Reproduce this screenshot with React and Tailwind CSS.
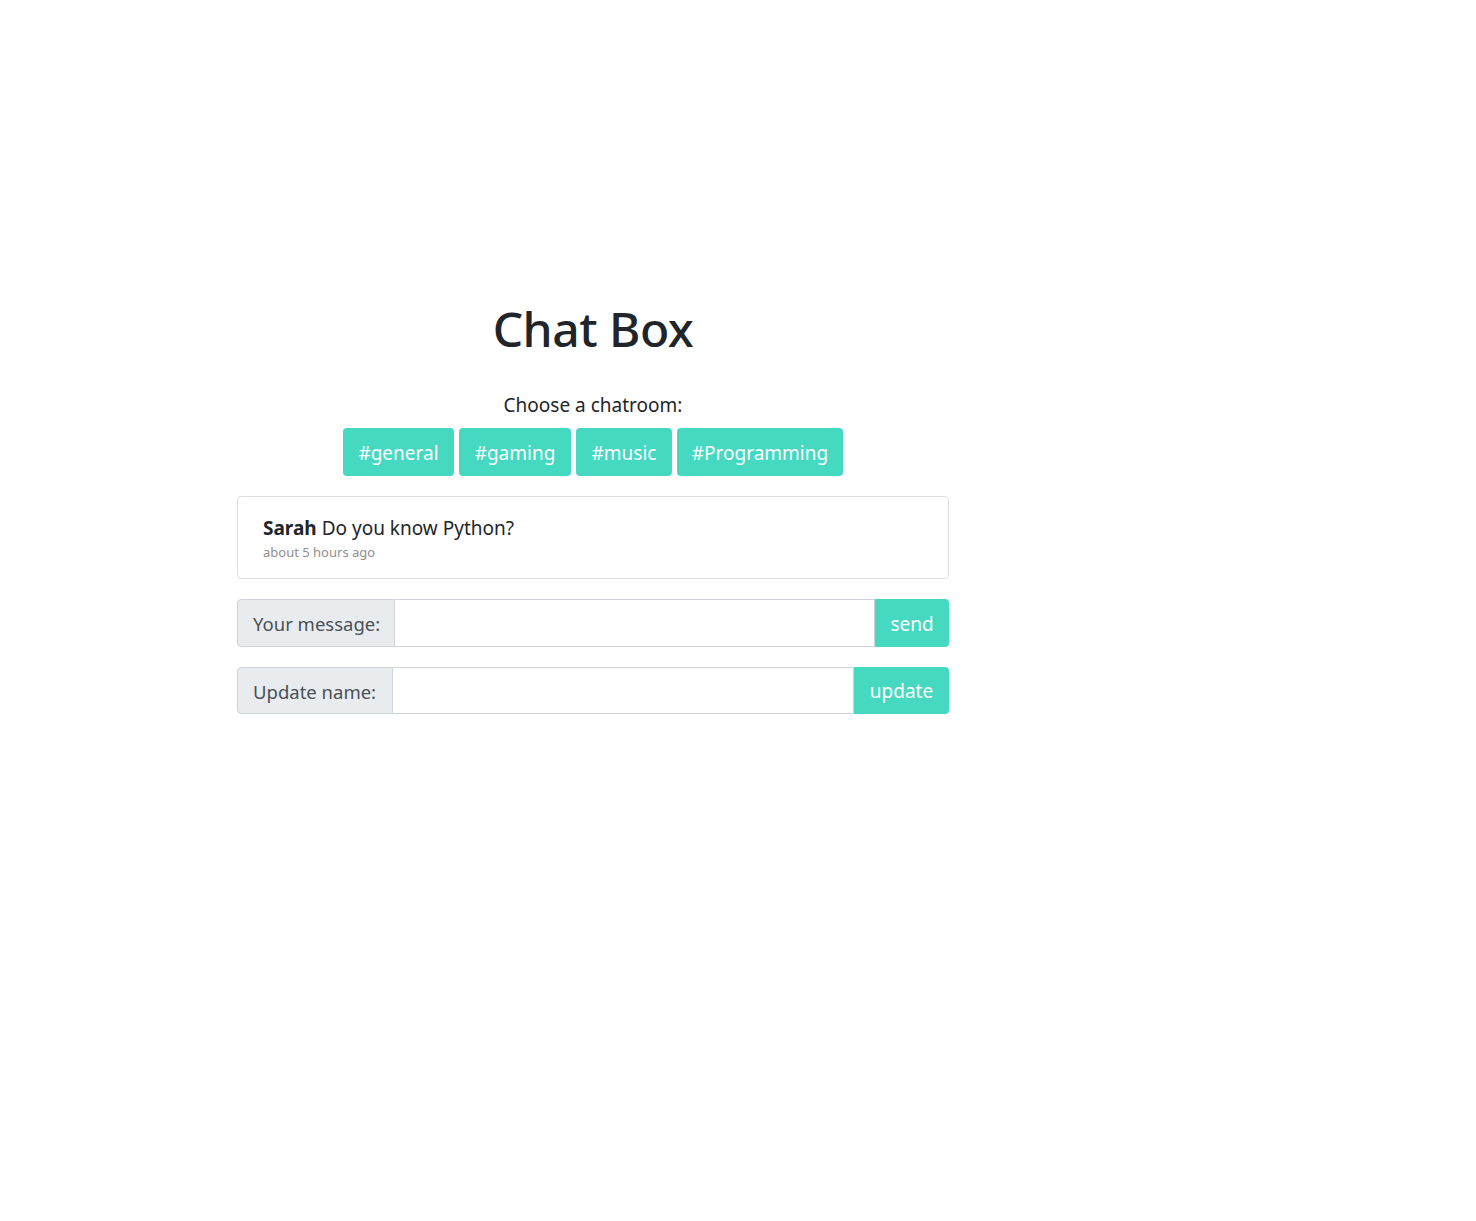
import React from "react";

export default function App() {
  const rooms = [
    ["#general", "w-[111px]"],
    ["#gaming", "w-[112px]"],
    ["#music", "w-[96px]"],
    ["#Programming", "w-[166px]"],
  ];
  return (
    <div className="min-h-[1221px] w-[1476px] bg-white text-[#212529] font-['Noto_Sans',sans-serif]">
      <div className="ml-[237px] w-[712px] pt-[300px]">
        <h1 className="text-center text-[48px] leading-[1.2] font-medium tracking-[-0.5px] text-[#212529]">
          Chat Box
        </h1>
        <p className="mt-[32px] text-center text-[19px] leading-[30px]">Choose a chatroom:</p>
        <div className="mt-[8px] flex justify-center gap-[5px]">
          {rooms.map(([r, w]) => (
            <button
              key={r}
              className={`h-[48px] ${w} whitespace-nowrap rounded-[4px] bg-[#45d9c1] pt-[2px] text-[19px] leading-[30px] text-white`}
            >
              {r}
            </button>
          ))}
        </div>
        <div className="mt-[20px] h-[83px] rounded-[4px] border border-[#dfdfdf] px-[25px] pt-[16px]">
          <div className="text-[19px] leading-[30px]">
            <span className="font-bold">Sarah</span> Do you know Python?
          </div>
          <div className="text-[13px] leading-[19px] text-[#8f8f8f]">about 5 hours ago</div>
        </div>
        <div className="mt-[20px] flex h-[48px]">
          <div className="flex w-[158px] items-center whitespace-nowrap rounded-l-[4px] border border-[#ced4da] bg-[#e9ecef] pl-[15px] pt-[3px] text-[18.5px] text-[#495057]">
            Your message:
          </div>
          <input className="h-full min-w-0 flex-1 border-y border-r border-[#ced4da] outline-none" />
          <button className="h-full w-[74px] rounded-r-[4px] bg-[#45d9c1] pt-[3px] text-[19px] text-white">send</button>
        </div>
        <div className="mt-[20px] flex h-[47px]">
          <div className="flex w-[156px] items-center whitespace-nowrap rounded-l-[4px] border border-[#ced4da] bg-[#e9ecef] pl-[15px] pt-[3px] text-[18.5px] text-[#495057]">
            Update name:
          </div>
          <input className="h-full min-w-0 flex-1 border-y border-r border-[#ced4da] outline-none" />
          <button className="h-full w-[95px] rounded-r-[4px] bg-[#45d9c1] pt-[3px] text-[19px] text-white">update</button>
        </div>
      </div>
    </div>
  );
}
